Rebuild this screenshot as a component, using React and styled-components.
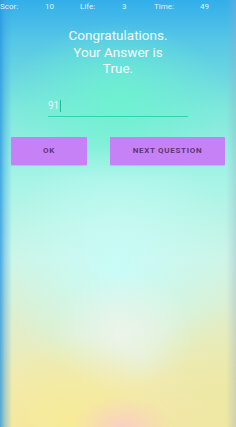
import React from "react";
import styled, { createGlobalStyle } from "styled-components";

const Global = createGlobalStyle`
  html, body { margin: 0; padding: 0; }
  body { font-family: Roboto, "Noto Sans", sans-serif; }
`;

const Screen = styled.div`
  position: relative;
  width: 236px;
  height: 427px;
  overflow: hidden;
  background:
    linear-gradient(to right, rgba(40, 150, 225, 0.8) 0px, rgba(60, 160, 230, 0.4) 5px, rgba(60, 160, 230, 0) 12px),
    linear-gradient(to left, rgba(150, 170, 200, 0.35) 0px, rgba(150, 170, 200, 0) 10px),
    radial-gradient(ellipse 50px 30px at 52% 100%, rgba(252, 200, 205, 0.75), rgba(252, 200, 205, 0)),
    radial-gradient(ellipse 110px 90px at 30% 100%, rgba(246, 236, 150, 0.95), rgba(246, 236, 150, 0)),
    radial-gradient(ellipse 90px 100px at 95% 95%, rgba(236, 232, 160, 0.8), rgba(236, 232, 160, 0)),
    radial-gradient(ellipse 70px 60px at 52% 78%, rgba(240, 244, 236, 0.85), rgba(240, 244, 236, 0)),
    radial-gradient(ellipse 120px 120px at 50% 62%, rgba(200, 252, 248, 0.95), rgba(200, 252, 248, 0)),
    radial-gradient(ellipse 110px 80px at 50% 24%, rgba(110, 242, 208, 0.95), rgba(110, 242, 208, 0)),
    linear-gradient(to bottom, #33aeea 0px, #55c6e6 40px, #80e8dc 110px, #a6f4e6 180px, #cef4e6 260px, #e0eecc 320px, #f0eab4 380px, #f4e4a8 427px);
`;

const Content = styled.div`
  display: flex;
  flex-direction: column;
  align-items: center;
`;

const StatusRow = styled.div`
  display: grid;
  grid-template-columns: 45px 35px 42px 32px 46px 36px;
  width: 236px;
  height: 13px;
  align-items: center;
  color: rgba(240, 250, 255, 0.92);
  font-size: 8px;
`;

const Cell = styled.span`
  white-space: nowrap;
`;

const Title = styled.div`
  margin-top: 14px;
  width: 150px;
  text-align: center;
  color: #f4fbff;
  font-size: 13.5px;
  line-height: 16.5px;
`;

const Field = styled.div`
  margin-top: 19px;
  width: 140px;
  height: 20px;
  border-bottom: 1.5px solid #2fd3ad;
  display: flex;
  align-items: center;
  color: rgba(240, 250, 255, 0.9);
  font-size: 10px;
`;

const Caret = styled.span`
  display: inline-block;
  width: 1px;
  height: 12px;
  margin-left: 1px;
  background: #22b89a;
`;

const ButtonRow = styled.div`
  margin-top: 20px;
  width: 214px;
  display: flex;
  justify-content: space-between;
`;

const Button = styled.button`
  width: ${p => p.$w}px;
  height: 28px;
  border: none;
  border-radius: 1px;
  background: #c681f6;
  color: #5b3a6e;
  font-family: Roboto, "Noto Sans", sans-serif;
  font-weight: 700;
  font-size: 8px;
  letter-spacing: 0.7px;
  padding: 0;
  box-shadow: 0 1px 1px rgba(80, 60, 120, 0.15);
`;

export default function App() {
  return (
    <>
      <Global />
      <Screen>
        <Content>
          <StatusRow>
            <Cell>Scor:</Cell>
            <Cell>10</Cell>
            <Cell>Life:</Cell>
            <Cell>3</Cell>
            <Cell>Time:</Cell>
            <Cell>49</Cell>
          </StatusRow>
          <Title>
            Congratulations.
            <br />
            Your Answer is
            <br />
            True.
          </Title>
          <Field>
            91
            <Caret />
          </Field>
          <ButtonRow>
            <Button $w={76}>OK</Button>
            <Button $w={115}>NEXT QUESTION</Button>
          </ButtonRow>
        </Content>
      </Screen>
    </>
  );
}
